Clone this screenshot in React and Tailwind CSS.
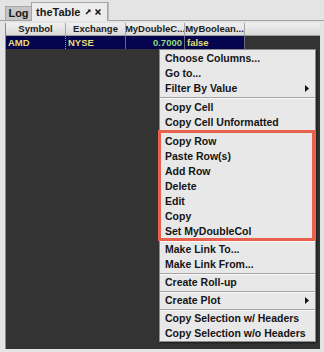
import React from 'react';

const font = { fontFamily: '"Lucida Grande", "Liberation Sans", Arial, sans-serif' };

const menu = [
  { label: 'Choose Columns...' },
  { label: 'Go to...' },
  { label: 'Filter By Value', sub: true },
  { sep: 4 },
  { label: 'Copy Cell' },
  { label: 'Copy Cell Unformatted' },
  { sep: 4 },
  { label: 'Copy Row' },
  { label: 'Paste Row(s)' },
  { label: 'Add Row' },
  { label: 'Delete' },
  { label: 'Edit' },
  { label: 'Copy' },
  { label: 'Set MyDoubleCol' },
  { sep: 3 },
  { label: 'Make Link To...' },
  { label: 'Make Link From...' },
  { sep: 3 },
  { label: 'Create Roll-up' },
  { sep: 3 },
  { label: 'Create Plot', sub: true },
  { sep: 3 },
  { label: 'Copy Selection w/ Headers' },
  { label: 'Copy Selection w/o Headers' },
];

const columns = [
  { name: 'Symbol', w: 'w-[60px]', value: 'AMD', align: 'text-left', color: 'text-[#e6df6e]' },
  { name: 'Exchange', w: 'w-[60px]', value: 'NYSE', align: 'text-left', color: 'text-[#e6df6e]' },
  { name: 'MyDoubleC...', w: 'w-[59px]', value: '0.7000', align: 'text-right', color: 'text-[#8fdc7e]' },
  { name: 'MyBoolean...', w: 'w-[60px]', value: 'false', align: 'text-left', color: 'text-[#e6df6e]' },
];

function Separator({ h }) {
  return (
    <div className={h === 4 ? 'h-[4px] flex flex-col justify-center' : 'h-[3px] flex flex-col justify-center'}>
      <div className="h-px bg-[#a4a4a4]" />
      <div className="h-px bg-[#fafafa]" />
    </div>
  );
}

function PopupMenu() {
  return (
    <div className="absolute left-[159px] top-[49px] w-[157px] h-[293px] bg-[#e8e8e8] border border-[#8c8c8c] pt-[1px] shadow-[1px_1px_2px_rgba(0,0,0,0.5)]">
      {menu.map((item, i) =>
        item.sep ? (
          <Separator key={i} h={item.sep} />
        ) : (
          <div key={i} className="h-[15px] pl-[5px] pr-[6px] flex items-center justify-between text-[10.5px] font-bold text-[#151515] leading-none">
            <span>{item.label}</span>
            {item.sub && (
              <svg width="4" height="7" viewBox="0 0 4 7">
                <path d="M0 0 L4 3.5 L0 7 Z" fill="#111" />
              </svg>
            )}
          </div>
        )
      )}
    </div>
  );
}

export default function App() {
  return (
    <div className="relative w-[324px] h-[352px] bg-[#e4e4e4] overflow-hidden flex flex-col" style={font}>
      {/* tab strip */}
      <div className="h-[21px] flex items-end pl-[5px] border-b border-[#a2a2a2] shrink-0">
        <div className="h-[14px] w-[26px] bg-[#c6c6c6] border-t border-l border-[#a8a8a8] flex items-center justify-center text-[11px] font-bold text-[#1a1a1a]">
          Log
        </div>
        <div className="h-[19px] w-[77px] bg-[#ececec] border-t border-l border-r border-[#a4a4a4] shadow-[1px_0_0_#bdbdbd] -mb-px flex items-center pl-[4px] gap-[4px] text-[11px] font-bold text-[#1a1a1a]">
          <span>theTable</span>
          <svg width="6" height="6" viewBox="0 0 6 6" className="ml-[1px]">
            <path d="M1 5 L4.5 1.5" stroke="#111" strokeWidth="1.4" />
            <path d="M2.5 0.5 L5.5 0.5 L5.5 3.5 Z" fill="#111" />
          </svg>
          <svg width="6" height="6" viewBox="0 0 6 6">
            <path d="M0.5 0.5 L5.5 5.5 M5.5 0.5 L0.5 5.5" stroke="#111" strokeWidth="1.5" />
          </svg>
        </div>
      </div>

      {/* panel */}
      <div className="flex-1 pl-[5px] pr-[4px] pt-[2px] pb-[3px] flex flex-col">
        <div className="flex-1 bg-[#333333] border-l border-[#8a8a8a] flex flex-col">
          {/* header */}
          <div className="h-[13px] flex bg-gradient-to-b from-[#f0f0f0] to-[#dadada] border-b border-[#9c9c9c]">
            {columns.map((c) => (
              <div
                key={c.name}
                className={`${c.w} shrink-0 border-r border-[#a6a6a6] flex items-center justify-center text-[9.5px] font-bold text-[#1c1c1c] leading-none whitespace-nowrap overflow-hidden`}
              >
                {c.name}
              </div>
            ))}
          </div>
          {/* data row */}
          <div className="h-[13px] flex">
            {columns.map((c, i) => (
              <div
                key={c.name}
                className={`${c.w} shrink-0 bg-[#05054f] ${i === 0 ? 'border-r border-dotted border-[#9a9a9a]' : 'border-r border-[#6a6a7a]'} ${c.align} ${c.color} px-[2px] text-[9.5px] font-bold leading-[13px]`}
              >
                {c.value}
              </div>
            ))}
          </div>
        </div>
      </div>

      <PopupMenu />

      {/* highlight */}
      <div className="absolute left-[158px] top-[130px] w-[157px] h-[111px] border-[3px] border-[#e8614d]" />
    </div>
  );
}
